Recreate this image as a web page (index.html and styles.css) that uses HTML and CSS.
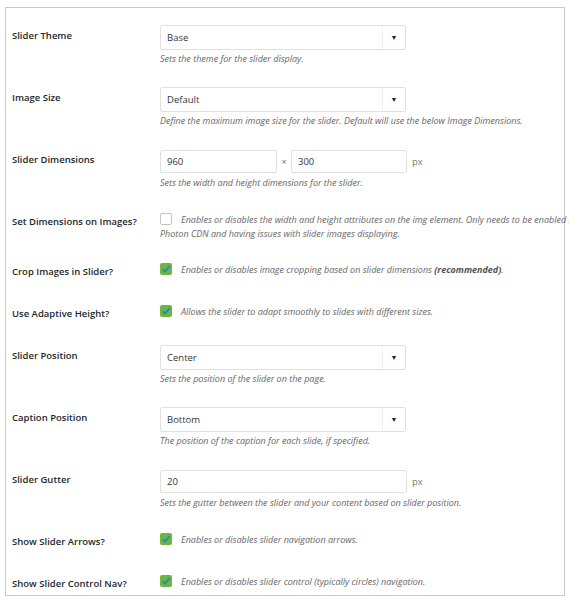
FILE: index.html
```html
<!DOCTYPE html>
<html>
<head>
<meta charset="utf-8">
<link rel="stylesheet" href="styles.css">
</head>
<body>
<div class="panel">
  <div class="row">
    <div class="label">Slider Theme</div>
    <div class="field">
      <div class="select"><span class="select-text">Base</span><span class="select-arrow">▼</span></div>
      <p class="desc">Sets the theme for the slider display.</p>
    </div>
  </div>
  <div class="row">
    <div class="label">Image Size</div>
    <div class="field">
      <div class="select"><span class="select-text">Default</span><span class="select-arrow">▼</span></div>
      <p class="desc">Define the maximum image size for the slider. Default will use the below Image Dimensions.</p>
    </div>
  </div>
  <div class="row">
    <div class="label">Slider Dimensions</div>
    <div class="field">
      <div class="inline">
        <div class="input small">960</div>
        <span class="times">×</span>
        <div class="input small2">300</div>
        <span class="unit">px</span>
      </div>
      <p class="desc">Sets the width and height dimensions for the slider.</p>
    </div>
  </div>
  <div class="row check-row">
    <div class="label">Set Dimensions on Images?</div>
    <div class="field">
      <p class="check-line nowrap"><span class="checkbox"></span><span class="desc-inline">Enables or disables the width and height attributes on the img element. Only needs to be enabled if using<br>Photon CDN and having issues with slider images displaying.</span></p>
    </div>
  </div>
  <div class="row check-row">
    <div class="label">Crop Images in Slider?</div>
    <div class="field">
      <p class="check-line"><span class="checkbox checked"><svg viewBox="0 0 12 12" width="12" height="12"><path d="M2.6 6.2 L5 8.6 L9.6 3.2" fill="none" stroke="#1e8cbe" stroke-width="1.8"/></svg></span><span class="desc-inline">Enables or disables image cropping based on slider dimensions <b>(recommended)</b>.</span></p>
    </div>
  </div>
  <div class="row check-row">
    <div class="label">Use Adaptive Height?</div>
    <div class="field">
      <p class="check-line"><span class="checkbox checked"><svg viewBox="0 0 12 12" width="12" height="12"><path d="M2.6 6.2 L5 8.6 L9.6 3.2" fill="none" stroke="#1e8cbe" stroke-width="1.8"/></svg></span><span class="desc-inline">Allows the slider to adapt smoothly to slides with different sizes.</span></p>
    </div>
  </div>
  <div class="row">
    <div class="label">Slider Position</div>
    <div class="field">
      <div class="select"><span class="select-text">Center</span><span class="select-arrow">▼</span></div>
      <p class="desc">Sets the position of the slider on the page.</p>
    </div>
  </div>
  <div class="row">
    <div class="label">Caption Position</div>
    <div class="field">
      <div class="select"><span class="select-text">Bottom</span><span class="select-arrow">▼</span></div>
      <p class="desc">The position of the caption for each slide, if specified.</p>
    </div>
  </div>
  <div class="row">
    <div class="label">Slider Gutter</div>
    <div class="field">
      <div class="inline">
        <div class="input wide">20</div>
        <span class="unit">px</span>
      </div>
      <p class="desc">Sets the gutter between the slider and your content based on slider position.</p>
    </div>
  </div>
  <div class="row check-row">
    <div class="label">Show Slider Arrows?</div>
    <div class="field">
      <p class="check-line"><span class="checkbox checked"><svg viewBox="0 0 12 12" width="12" height="12"><path d="M2.6 6.2 L5 8.6 L9.6 3.2" fill="none" stroke="#1e8cbe" stroke-width="1.8"/></svg></span><span class="desc-inline">Enables or disables slider navigation arrows.</span></p>
    </div>
  </div>
  <div class="row check-row last">
    <div class="label">Show Slider Control Nav?</div>
    <div class="field">
      <p class="check-line"><span class="checkbox checked"><svg viewBox="0 0 12 12" width="12" height="12"><path d="M2.6 6.2 L5 8.6 L9.6 3.2" fill="none" stroke="#1e8cbe" stroke-width="1.8"/></svg></span><span class="desc-inline">Enables or disables slider control (typically circles) navigation.</span></p>
    </div>
  </div>
</div>
</body>
</html>
```
FILE: styles.css
```css
html, body {
  margin: 0;
  padding: 0;
  background: #fff;
  overflow: hidden;
}
body {
  font-family: "Open Sans", "Noto Sans", sans-serif;
  color: #23282d;
}
.panel {
  margin: 7px 0 0 5px;
  width: 560px;
  height: 589px;
  box-sizing: border-box;
  border: 1px solid #c9c9c9;
  padding-top: 6px;
}
.row {
  display: flex;
  align-items: flex-start;
}
.label {
  width: 154px;
  flex: none;
  box-sizing: border-box;
  padding: 15px 0 13px 6px;
  font-size: 9.5px;
  font-weight: 600;
  line-height: 14px;
  color: #23282d;
}
.field {
  padding: 11px 0;
  flex: 1;
  min-width: 0;
}
.check-row .field {
  padding: 13px 0 9px;
}
.last .label { padding-bottom: 4px; }
.last .field { padding-bottom: 4px; }
.select {
  width: 246px;
  height: 25px;
  box-sizing: border-box;
  border: 1px solid #e1e1e1;
  border-radius: 2px;
  display: flex;
  align-items: center;
  background: #fff;
}
.select-text {
  flex: 1;
  padding-left: 6px;
  font-size: 9.5px;
  color: #32373c;
}
.select-arrow {
  width: 22px;
  height: 23px;
  border-left: 1px solid #f0f0f0;
  display: flex;
  align-items: center;
  justify-content: center;
  font-size: 7px;
  color: #222;
}
.inline {
  display: flex;
  align-items: center;
  height: 25px;
}
.input {
  height: 23px;
  box-sizing: border-box;
  border: 1px solid #e1e1e1;
  border-radius: 2px;
  display: flex;
  align-items: center;
  padding-left: 6px;
  font-size: 9.5px;
  color: #32373c;
}
.input.small { width: 117px; }
.input.small2 { width: 116px; }
.input.wide { width: 247px; }
.times {
  width: 14px;
  text-align: center;
  font-size: 9px;
  color: #777;
}
.unit {
  margin-left: 5px;
  font-size: 9.5px;
  color: #777;
}
.desc {
  margin: 3px 0 0;
  font-size: 9px;
  line-height: 12px;
  font-style: italic;
  color: #666;
}
.check-line {
  margin: 0;
  font-size: 9px;
  line-height: 14px;
  color: #666;
}
.nowrap { white-space: nowrap; }
.checkbox {
  display: inline-block;
  width: 12px;
  height: 12px;
  box-sizing: border-box;
  border: 1px solid #c4c4c4;
  border-radius: 2px;
  vertical-align: -2px;
  margin-right: 9px;
  background: #fff;
}
.checkbox.checked {
  border: none;
  background: #6fb43f;
}
.checkbox svg { display: block; }
.desc-inline {
  font-style: italic;
  color: #666;
}
.desc-inline b {
  font-weight: 700;
  color: #555;
}
```
